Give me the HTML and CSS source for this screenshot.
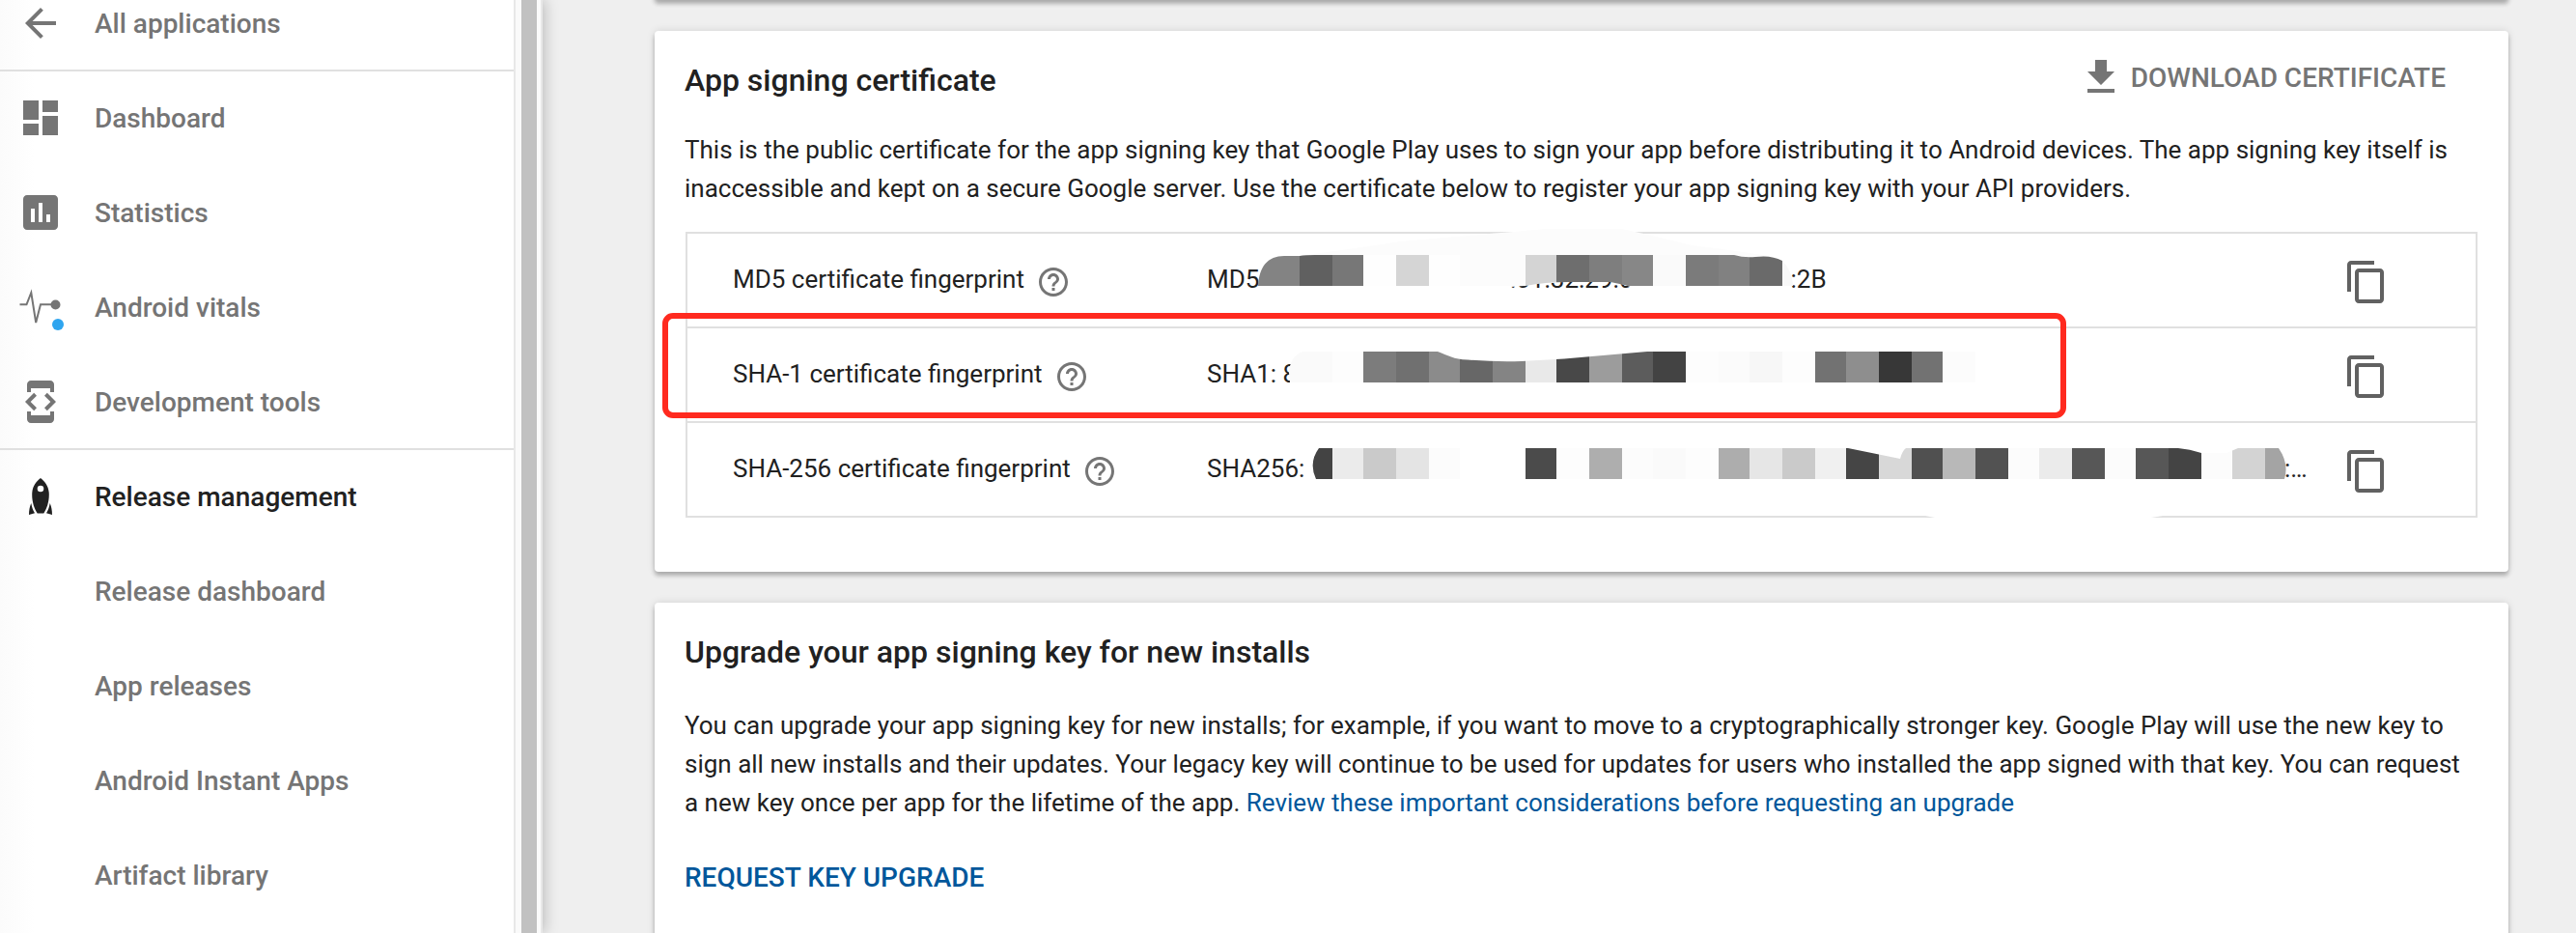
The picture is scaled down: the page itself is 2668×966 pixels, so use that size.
FILE: index.html
```html
<!DOCTYPE html>
<html lang="en">
<head>
<meta charset="utf-8">
<title>App signing</title>
<link rel="stylesheet" href="styles.css">
</head>
<body>
<div class="app">
  <aside class="sidebar">
    <nav class="nav">
      <a class="nav-item divided"><svg class="icon" viewBox="0 0 24 24"><path d="M20 11H7.83l5.59-5.59L12 4l-8 8 8 8 1.41-1.41L7.83 13H20v-2z"/></svg><span>All applications</span></a>
      <a class="nav-item"><svg class="icon" viewBox="0 0 24 24"><path d="M3 13h8V3H3v10zm0 8h8v-6H3v6zm10 0h8V11h-8v10zm0-18v6h8V3h-8z"/></svg><span>Dashboard</span></a>
      <a class="nav-item"><svg class="icon" viewBox="0 0 24 24"><path d="M19 3H5c-1.100 0-2 .9-2 2v14c0 1.100.9 2 2 2h14c1.100 0 2-.9 2-2V5c0-1.100-.9-2-2-2zM9 17H7v-7h2v7zm4 0h-2V7h2v10zm4 0h-2v-4h2v4z"/></svg><span>Statistics</span></a>
      <a class="nav-item"><svg class="icon" viewBox="0 0 48 48"><path class="pulse" d="M2.500 21.300H9.500L14.300 9 19.200 40 24 21.300H38"/><circle cx="39.500" cy="21.500" r="5"/><circle class="alert" cx="42" cy="42" r="6"/></svg><span>Android vitals</span></a>
      <a class="nav-item divided"><svg class="icon" viewBox="0 0 24 24"><path d="M7 5h10v2h2V3c0-1.100-.9-1.990-2-1.990L7 1c-1.100 0-2 .9-2 2v4h2V5zm8.410 11.590L20 12l-4.590-4.590L14 8.830 17.170 12 14 15.170l1.410 1.420zM10 15.170L6.830 12 10 8.830 8.590 7.410 4 12l4.590 4.590L10 15.170zM17 19H7v-2H5v4c0 1.100.9 2 2 2h10c1.100 0 2-.9 2-2v-4h-2v2z"/></svg><span>Development tools</span></a>
      <a class="nav-item active"><svg class="icon" viewBox="0 0 48 48"><path fill-rule="evenodd" d="M24 5C28.500 8.500 32.800 13.500 32.800 22 32.800 30 30.500 36.500 27.300 41.500H20.700C17.500 36.500 15.200 30 15.200 22 15.200 13.500 19.500 8.500 24 5zM24 12.700a3.300 3.300 0 1 0 0 6.600 3.300 3.300 0 1 0 0-6.600z"/><path d="M14.300 31C14.800 34.500 16 38 18 41.300L12 43C12.100 38 12.700 34.500 14.300 31zM33.700 31C33.200 34.500 32 38 30 41.300L36 43C35.900 38 35.300 34.500 33.700 31z"/></svg><span>Release management</span></a>
      <a class="nav-item sub"><span>Release dashboard</span></a>
      <a class="nav-item sub"><span>App releases</span></a>
      <a class="nav-item sub"><span>Android Instant Apps</span></a>
      <a class="nav-item sub"><span>Artifact library</span></a>
    </nav>
    <div class="scroll-track"><div class="scroll-thumb"></div></div>
  </aside>

  <main class="content">
    <section class="card previous"></section>

    <section class="card">
      <header class="card-header">
        <h2>App signing certificate</h2>
        <a class="download"><svg class="icon" viewBox="0 0 24 24"><path d="M19 9h-4V3H9v6H5l7 7 7-7zM5 18v2h14v-2H5z"/></svg><span>DOWNLOAD CERTIFICATE</span></a>
      </header>
      <p class="intro">This is the public certificate for the app signing key that Google Play uses to sign your app before distributing it to Android devices. The app signing key itself is<br>inaccessible and kept on a secure Google server. Use the certificate below to register your app signing key with your API providers.</p>

      <div class="prints">
        <div class="print">
          <div class="label">MD5 certificate fingerprint<svg class="help" viewBox="0 0 24 24"><path d="M11 18h2v-2h-2v2zm1-16C6.480 2 2 6.480 2 12s4.480 10 10 10 10-4.480 10-10S17.520 2 12 2zm0 18c-4.410 0-8-3.590-8-8s3.590-8 8-8 8 3.590 8 8-3.590 8-8 8zm0-14c-2.210 0-4 1.790-4 4h2c0-1.100.9-2 2-2s2 .9 2 2c0 2-3 1.750-3 5h2c0-2.250 3-2.500 3-5 0-2.210-1.790-4-4-4z"/></svg></div>
          <div class="value">MD5</div>
          <svg class="icon copy" viewBox="0 0 24 24"><path d="M16 1H4c-1.100 0-2 .9-2 2v14h2V3h12V1zm3 4H8c-1.100 0-2 .9-2 2v14c0 1.100.9 2 2 2h11c1.100 0 2-.9 2-2V7c0-1.100-.9-2-2-2zm0 16H8V7h11v14z"/></svg>
        </div>
        <div class="print">
          <div class="label">SHA-1 certificate fingerprint<svg class="help" viewBox="0 0 24 24"><path d="M11 18h2v-2h-2v2zm1-16C6.480 2 2 6.480 2 12s4.480 10 10 10 10-4.480 10-10S17.520 2 12 2zm0 18c-4.410 0-8-3.590-8-8s3.590-8 8-8 8 3.590 8 8-3.590 8-8 8zm0-14c-2.210 0-4 1.790-4 4h2c0-1.100.9-2 2-2s2 .9 2 2c0 2-3 1.750-3 5h2c0-2.250 3-2.500 3-5 0-2.210-1.790-4-4-4z"/></svg></div>
          <div class="value">SHA1: 8</div>
          <svg class="icon copy" viewBox="0 0 24 24"><path d="M16 1H4c-1.100 0-2 .9-2 2v14h2V3h12V1zm3 4H8c-1.100 0-2 .9-2 2v14c0 1.100.9 2 2 2h11c1.100 0 2-.9 2-2V7c0-1.100-.9-2-2-2zm0 16H8V7h11v14z"/></svg>
        </div>
        <div class="print">
          <div class="label">SHA-256 certificate fingerprint<svg class="help" viewBox="0 0 24 24"><path d="M11 18h2v-2h-2v2zm1-16C6.480 2 2 6.480 2 12s4.480 10 10 10 10-4.480 10-10S17.520 2 12 2zm0 18c-4.410 0-8-3.590-8-8s3.590-8 8-8 8 3.590 8 8-3.590 8-8 8zm0-14c-2.210 0-4 1.790-4 4h2c0-1.100.9-2 2-2s2 .9 2 2c0 2-3 1.750-3 5h2c0-2.250 3-2.500 3-5 0-2.210-1.790-4-4-4z"/></svg></div>
          <div class="value">SHA256:</div>
          <svg class="icon copy" viewBox="0 0 24 24"><path d="M16 1H4c-1.100 0-2 .9-2 2v14h2V3h12V1zm3 4H8c-1.100 0-2 .9-2 2v14c0 1.100.9 2 2 2h11c1.100 0 2-.9 2-2V7c0-1.100-.9-2-2-2zm0 16H8V7h11v14z"/></svg>
        </div>

        <!-- Pixelated strips that hide the fingerprints -->
        <svg class="redaction" viewBox="710 236 1856 304">
          <defs>
            <clipPath id="md5"><path d="M1303 296C1304 276 1313 265 1330 265H1346Q1352 264 1362 264H1796Q1806 267 1818 266C1830 264.500 1838 266 1846 270V296z"/></clipPath>
            <clipPath id="md5-gap"><path d="M1552 298Q1570 296.500 1580 296Q1600 292 1625 292H1668Q1680 294 1692 298V302H1552z"/></clipPath>
            <clipPath id="sha1"><path d="M1336 396L1335 386C1335 376 1341 366 1350 364H1489C1500 368 1505 372 1520 372.500Q1550 375 1576 374L1620 371.500 1706 364H2046V396z"/></clipPath>
            <clipPath id="sha256"><path d="M1363 496Q1355 479 1366 464H1914L1946 470.500 1968 475Q1970 467 1974 464H2256Q2268 465 2280 469H2306L2318 464H2360Q2371 480 2366 496z"/></clipPath>
          </defs>

          <path fill="#fcfcfc" d="M1352 264Q1400 258 1450 250Q1590 238 1600 237H1680Q1712 244 1752 254Q1800 260 1838 266Q1856 274 1857 296H1700V264z"/>
          <g clip-path="url(#md5)">
            <rect x="1300" y="264" width="46" height="32" fill="#838383"/>
            <rect x="1346" y="264" width="34" height="32" fill="#606060"/>
            <rect x="1380" y="264" width="32" height="32" fill="#777777"/>
            <rect x="1412" y="264" width="34" height="32" fill="#fefefe"/>
            <rect x="1446" y="264" width="34" height="32" fill="#d5d5d5"/>
            <rect x="1480" y="264" width="32" height="32" fill="#fefefe"/>
            <rect x="1512" y="264" width="68" height="32" fill="#fcfcfc"/>
            <rect x="1580" y="264" width="32" height="32" fill="#d4d4d4"/>
            <rect x="1612" y="264" width="34" height="32" fill="#6e6e6e"/>
            <rect x="1646" y="264" width="34" height="32" fill="#7e7e7e"/>
            <rect x="1680" y="264" width="32" height="32" fill="#878787"/>
            <rect x="1712" y="264" width="34" height="32" fill="#fafafa"/>
            <rect x="1746" y="264" width="34" height="32" fill="#7b7b7b"/>
            <rect x="1780" y="264" width="32" height="32" fill="#818181"/>
            <rect x="1812" y="264" width="34" height="32" fill="#6a6a6a"/>
          </g>
          <g clip-path="url(#md5-gap)">
            <rect x="1550" y="290" width="145" height="12" fill="#ffffff"/>
            <text x="1564" y="298">:01:32:29:0</text>
          </g>
          <text x="1854.500" y="298">:2B</text>
          <path fill="#f8f8f8" d="M1846 270Q1856 280 1857 296H1846z"/>

          <g clip-path="url(#sha1)">
            <rect x="1334" y="364" width="46" height="32" fill="#fafafa"/>
            <rect x="1380" y="364" width="32" height="32" fill="#fdfdfd"/>
            <rect x="1412" y="364" width="34" height="32" fill="#7c7c7c"/>
            <rect x="1446" y="364" width="34" height="32" fill="#707070"/>
            <rect x="1480" y="364" width="32" height="32" fill="#8b8b8b"/>
            <rect x="1512" y="364" width="34" height="32" fill="#676767"/>
            <rect x="1546" y="364" width="34" height="32" fill="#848484"/>
            <rect x="1580" y="364" width="32" height="32" fill="#e9e9e9"/>
            <rect x="1612" y="364" width="34" height="32" fill="#484848"/>
            <rect x="1646" y="364" width="34" height="32" fill="#9c9c9c"/>
            <rect x="1680" y="364" width="32" height="32" fill="#5c5c5c"/>
            <rect x="1712" y="364" width="34" height="32" fill="#434343"/>
            <rect x="1746" y="364" width="34" height="32" fill="#fdfdfd"/>
            <rect x="1780" y="364" width="32" height="32" fill="#fbfbfb"/>
            <rect x="1812" y="364" width="34" height="32" fill="#f7f7f7"/>
            <rect x="1846" y="364" width="34" height="32" fill="#fdfdfd"/>
            <rect x="1880" y="364" width="32" height="32" fill="#727272"/>
            <rect x="1912" y="364" width="34" height="32" fill="#8e8e8e"/>
            <rect x="1946" y="364" width="34" height="32" fill="#373737"/>
            <rect x="1980" y="364" width="32" height="32" fill="#727272"/>
            <rect x="2012" y="364" width="34" height="32" fill="#fcfcfc"/>
          </g>

          <g clip-path="url(#sha256)">
            <rect x="1356" y="464" width="24" height="32" fill="#434343"/>
            <rect x="1380" y="464" width="32" height="32" fill="#ebebeb"/>
            <rect x="1412" y="464" width="34" height="32" fill="#cacaca"/>
            <rect x="1446" y="464" width="34" height="32" fill="#e4e4e4"/>
            <rect x="1480" y="464" width="32" height="32" fill="#fcfcfc"/>
            <rect x="1580" y="464" width="32" height="32" fill="#4b4b4b"/>
            <rect x="1612" y="464" width="34" height="32" fill="#fdfdfd"/>
            <rect x="1646" y="464" width="34" height="32" fill="#aeaeae"/>
            <rect x="1680" y="464" width="32" height="32" fill="#fcfcfc"/>
            <rect x="1712" y="464" width="34" height="32" fill="#fafafa"/>
            <rect x="1746" y="464" width="34" height="32" fill="#fdfdfd"/>
            <rect x="1780" y="464" width="32" height="32" fill="#adadad"/>
            <rect x="1812" y="464" width="34" height="32" fill="#e6e6e6"/>
            <rect x="1846" y="464" width="34" height="32" fill="#cacaca"/>
            <rect x="1880" y="464" width="32" height="32" fill="#f0f0f0"/>
            <rect x="1912" y="464" width="34" height="32" fill="#454545"/>
            <rect x="1946" y="464" width="34" height="32" fill="#d8d8d8"/>
            <rect x="1980" y="464" width="32" height="32" fill="#505050"/>
            <rect x="2012" y="464" width="34" height="32" fill="#b8b8b8"/>
            <rect x="2046" y="464" width="34" height="32" fill="#525252"/>
            <rect x="2080" y="464" width="32" height="32" fill="#fcfcfc"/>
            <rect x="2112" y="464" width="34" height="32" fill="#ebebeb"/>
            <rect x="2146" y="464" width="34" height="32" fill="#575757"/>
            <rect x="2180" y="464" width="32" height="32" fill="#fcfcfc"/>
            <rect x="2212" y="464" width="34" height="32" fill="#575757"/>
            <rect x="2246" y="464" width="34" height="32" fill="#444444"/>
            <rect x="2280" y="464" width="32" height="32" fill="#fcfcfc"/>
            <rect x="2312" y="464" width="34" height="32" fill="#d3d3d3"/>
            <rect x="2346" y="464" width="24" height="32" fill="#a4a4a4"/>
          </g>
          <text x="2366" y="494">:…</text>
          <path fill="#ffffff" d="M1994 534L2004 536V538H2228V536L2240 534V533H1994z"/>
        </svg>
        <div class="highlight"></div>
      </div>
    </section>

    <section class="card upgrade">
      <h2>Upgrade your app signing key for new installs</h2>
      <p class="details">You can upgrade your app signing key for new installs; for example, if you want to move to a cryptographically stronger key. Google Play will use the new key to<br>sign all new installs and their updates. Your legacy key will continue to be used for updates for users who installed the app signed with that key. You can request<br>a new key once per app for the lifetime of the app. <a class="link">Review these important considerations before requesting an upgrade</a></p>
      <a class="request">REQUEST KEY UPGRADE</a>
    </section>
  </main>
</div>
</body>
</html>
```

FILE: styles.css
```css
* { box-sizing: border-box; }

body {
  margin: 0;
  background: #efefef;
  color: #212121;
  font-family: Roboto, "Liberation Sans", sans-serif;
  font-size: 26px;
  line-height: 40px;
}

h2, p { margin: 0; }

h2 {
  font-size: 32px;
  font-weight: 500;
  line-height: 40px;
}

.app {
  display: flex;
  height: 966px;
  overflow: hidden;
}

/* Sidebar */
.sidebar {
  display: flex;
  flex: none;
  width: 562px;
  background: linear-gradient(to right, #fbfbfb, #ffffff 36px);
  border-right: 2px solid #e8e8e8;
  box-shadow: 2px 0 14px rgba(0, 0, 0, 0.22);
}

.nav {
  width: 532px;
  margin-top: -24px;
}

.nav-item {
  display: flex;
  align-items: center;
  gap: 32px;
  height: 98px;
  padding-left: 18px;
  border-bottom: 2px solid transparent;
  color: #757575;
  font-size: 28px;
  font-weight: 500;
}

.nav-item span,
.download span { padding-top: 1px; }

.nav-item.divided { border-bottom-color: #e0e0e0; }
.nav-item.active { color: #212121; }
.nav-item.sub { padding-left: 98px; }

.icon {
  flex: none;
  width: 48px;
  height: 48px;
  fill: currentColor;
}

.pulse {
  fill: none;
  stroke: currentColor;
  stroke-width: 2;
}

.alert { fill: #2fa5ef; }

.scroll-track {
  width: 28px;
  padding: 0 4px 0 6px;
  border-left: 2px solid #e8e8e8;
  background: #fafafa;
}

.scroll-thumb {
  width: 16px;
  height: 100%;
  background: #c1c1c1;
}

/* Cards */
.content {
  display: flex;
  flex-direction: column;
  gap: 32px;
  flex: 1;
  padding: 0 70px 0 116px;
}

.card {
  flex: none;
  padding: 31px 30px 56px 31px;
  border-radius: 4px;
  background: #ffffff;
  box-shadow: 0 4px 4px rgba(0, 0, 0, 0.24), 0 0 8px rgba(0, 0, 0, 0.12);
}

.card.previous {
  height: 20px;
  margin-top: -20px;
  padding: 0;
}

.card.upgrade { height: 400px; }

.card-header {
  display: flex;
  justify-content: space-between;
  align-items: flex-start;
  height: 40px;
}

.download {
  display: flex;
  align-items: center;
  gap: 7px;
  margin: -7px 35px 0 0;
  color: #757575;
  font-size: 28px;
  font-weight: 500;
}

.intro {
  margin-top: 32px;
  white-space: nowrap;
}

.details {
  margin-top: 36px;
  white-space: nowrap;
}

.link { color: #01579b; }

.request {
  display: block;
  margin-top: 37px;
  color: #01579b;
  font-size: 28px;
  font-weight: 500;
  line-height: 41px;
}

/* Fingerprint table */
.prints {
  position: relative;
  width: 1856px;
  margin: 25px 0 0 1px;
  border: 2px solid #e0e0e0;
}

.print {
  display: flex;
  height: 98px;
  border-bottom: 2px solid #e0e0e0;
}

.print:nth-child(3) {
  height: 96px;
  border-bottom: 0;
}

.label {
  display: flex;
  width: 538px;
  padding: 27px 0 0 47px;
}

.help {
  width: 36px;
  height: 36px;
  margin: 5px 0 0 12px;
  fill: #757575;
}

.value {
  width: 1177px;
  padding-top: 27px;
}

.copy {
  margin-top: 26px;
  color: #616161;
}

.redaction {
  position: absolute;
  left: -2px;
  top: -6px;
  width: 1856px;
  height: 304px;
  fill: #212121;
  font-size: 26px;
}

.highlight {
  position: absolute;
  left: -26px;
  top: 82px;
  width: 1454px;
  height: 109px;
  border: 6px solid #ff2a1f;
  border-radius: 11px;
}
```
